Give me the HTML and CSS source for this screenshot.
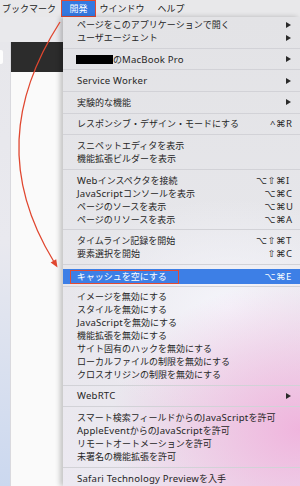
FILE: index.html
```html
<!DOCTYPE html>
<html lang="ja">
<head>
<meta charset="utf-8">
<title>開発メニュー</title>
<link rel="stylesheet" href="styles.css">
</head>
<body>
<div class="screen">

  <div class="menubar">
    <span class="mb-item">ブックマーク</span>
    <span class="mb-item active">開発</span>
    <span class="mb-item">ウインドウ</span>
    <span class="mb-item">ヘルプ</span>
  </div>

  <div class="main">
    <div class="window">
      <div class="toolbar"></div>
      <div class="window-body">
        <div class="strip"><span class="tab"></span></div>
        <div class="page"><div class="page-head"></div></div>
      </div>
    </div>

    <ul class="menu">
      <li class="item sub"><span class="label">ページをこのアプリケーションで開く</span></li>
      <li class="item sub"><span class="label">ユーザエージェント</span></li>
      <li class="sep"></li>
      <li class="item sub"><span class="label"><span class="redact"></span>の<span class="en">MacBook Pro</span></span></li>
      <li class="sep"></li>
      <li class="item sub"><span class="label"><span class="en">Service Worker</span></span></li>
      <li class="sep"></li>
      <li class="item sub"><span class="label">実験的な機能</span></li>
      <li class="sep"></li>
      <li class="item"><span class="label">レスポンシブ・デザイン・モードにする</span><span class="keys"><span class="mods">^⌘</span><span class="k">R</span></span></li>
      <li class="sep"></li>
      <li class="item"><span class="label">スニペットエディタを表示</span></li>
      <li class="item"><span class="label">機能拡張ビルダーを表示</span></li>
      <li class="sep"></li>
      <li class="item"><span class="label"><span class="en">Web</span>インスペクタを接続</span><span class="keys"><span class="mods">⌥⇧⌘</span><span class="k">I</span></span></li>
      <li class="item"><span class="label"><span class="en">JavaScript</span>コンソールを表示</span><span class="keys"><span class="mods">⌥⌘</span><span class="k">C</span></span></li>
      <li class="item"><span class="label">ページのソースを表示</span><span class="keys"><span class="mods">⌥⌘</span><span class="k">U</span></span></li>
      <li class="item"><span class="label">ページのリソースを表示</span><span class="keys"><span class="mods">⌥⌘</span><span class="k">A</span></span></li>
      <li class="sep"></li>
      <li class="item"><span class="label">タイムライン記録を開始</span><span class="keys"><span class="mods">⌥⇧⌘</span><span class="k">T</span></span></li>
      <li class="item"><span class="label">要素選択を開始</span><span class="keys"><span class="mods">⇧⌘</span><span class="k">C</span></span></li>
      <li class="sep"></li>
      <li class="item hl"><span class="label"><span class="boxed">キャッシュを空にする</span></span><span class="keys"><span class="mods">⌥⌘</span><span class="k">E</span></span></li>
      <li class="sep tight"></li>
      <li class="item"><span class="label">イメージを無効にする</span></li>
      <li class="item"><span class="label">スタイルを無効にする</span></li>
      <li class="item"><span class="label"><span class="en">JavaScript</span>を無効にする</span></li>
      <li class="item"><span class="label">機能拡張を無効にする</span></li>
      <li class="item"><span class="label">サイト固有のハックを無効にする</span></li>
      <li class="item"><span class="label">ローカルファイルの制限を無効にする</span></li>
      <li class="item"><span class="label">クロスオリジンの制限を無効にする</span></li>
      <li class="sep"></li>
      <li class="item sub"><span class="label"><span class="en">WebRTC</span></span></li>
      <li class="sep"></li>
      <li class="item"><span class="label">スマート検索フィールドからの<span class="en">JavaScript</span>を許可</span></li>
      <li class="item"><span class="label"><span class="en">AppleEvent</span>からの<span class="en">JavaScript</span>を許可</span></li>
      <li class="item"><span class="label">リモートオートメーションを許可</span></li>
      <li class="item"><span class="label">未署名の機能拡張を許可</span></li>
      <li class="sep"></li>
      <li class="item"><span class="label"><span class="en">Safari Technology Preview</span>を入手</span></li>
    </ul>
  </div>

  <!-- annotation arrow drawn over the screenshot -->
  <svg class="arrow" width="300" height="486" viewBox="0 0 300 486">
    <path d="M60,22 C10,100 3,178 53.5,261" fill="none" stroke="#e0462f" stroke-width="1.3"/>
    <polygon points="57.5,267.5 50.6,262.6 56.2,259.3" fill="#e0462f"/>
  </svg>

</div>
</body>
</html>
```

FILE: styles.css
```css
body {
  margin: 0;
  font-family: "Noto Sans", "Noto Sans CJK JP", sans-serif;
  font-size: 9px;
  color: #262626;
}
.screen {
  position: relative;
  width: 300px;
  height: 486px;
  overflow: hidden;
  display: flex;
  flex-direction: column;
}

/* top menu bar */
.menubar {
  display: flex;
  align-items: center;
  height: 17px;
  flex: none;
  background: #e8e8ea;
  color: #222;
}
.mb-item {
  display: flex;
  align-items: center;
  height: 17px;
  padding: 0 6.5px;
  box-sizing: border-box;
}
.mb-item:first-child {
  padding: 0 5px 0 2px;
}
.mb-item.active {
  padding: 0 7.5px;
  color: white;
  background: #3579e1;
  border: 1.5px solid #e24a33;
}
.mb-item.active + .mb-item {
  padding-left: 3.5px;
}

.main {
  flex: 1;
  display: flex;
  min-height: 0;
}

/* browser window peeking out on the left */
.window {
  width: 63px;
  flex: none;
  display: flex;
  flex-direction: column;
}
.toolbar {
  height: 25px;
  background: #e9e9ec;
}
.window-body {
  flex: 1;
  display: flex;
}
.strip {
  width: 11px;
  box-sizing: border-box;
  border-right: 1px solid #d9d9de;
  background: linear-gradient(#e7e7eb, #e9e9ef 45%, #cbd8ef);
}
.tab {
  display: block;
  width: 3px;
  height: 14px;
  margin-top: 8px;
  background: #fdfdfd;
  border-radius: 0 2px 2px 0;
}
.page {
  flex: 1;
  background: #fafafa;
}
.page-head {
  height: 30px;
  background: #2c2c2c;
}

/* the Develop menu */
.menu {
  flex: 1;
  list-style: none;
  margin: 0;
  padding: 1px 0 0;
  background:
    radial-gradient(ellipse 190px 150px at 100% 88%, rgba(240, 178, 220, 0.95), rgba(240, 190, 225, 0) 100%),
    radial-gradient(ellipse 160px 110px at 70% 62%, rgba(246, 246, 252, 0.9), rgba(246, 246, 252, 0) 100%),
    linear-gradient(#e3e3e6, #e6e6ea 45%, #ece9f1);
  box-shadow: -3px 0 5px rgba(0, 0, 0, 0.22);
}
.item {
  display: flex;
  align-items: center;
  height: 13px;
  line-height: 13px;
  padding: 0 7px 0 14px;
  white-space: nowrap;
}
.label {
  flex: 1;
}
.en {
  font-size: 9.6px;
  letter-spacing: 0.2px;
}
.sub::after {
  content: "";
  width: 0;
  height: 0;
  margin-right: 2px;
  border-left: 5px solid #2a2a2a;
  border-top: 3px solid transparent;
  border-bottom: 3px solid transparent;
}
.keys {
  display: flex;
  font-family: "Noto Sans", "DejaVu Sans", sans-serif;
  font-size: 9.5px;
}
.mods {
  letter-spacing: 0.5px;
}
.k {
  display: inline-block;
  width: 7px;
  text-align: left;
}
.redact {
  display: inline-block;
  width: 37px;
  height: 9px;
  margin-left: -1px;
  vertical-align: -1px;
  background: #000;
}
.sep {
  height: 1px;
  margin: 3.8px 0;
  background: #d2d2d7;
}
.sep.tight {
  margin: 2.5px 0;
}

/* highlighted entry */
.hl {
  height: 15px;
  line-height: 15px;
  color: white;
  background: #3d7fe6;
}
.boxed {
  display: inline-block;
  height: 14px;
  line-height: 12px;
  margin-left: -7px;
  padding: 0 11px 0 5.7px;
  border: 1.3px solid #e24a33;
  box-sizing: border-box;
}

.arrow {
  position: absolute;
  top: 0;
  left: 0;
  pointer-events: none;
}
```
